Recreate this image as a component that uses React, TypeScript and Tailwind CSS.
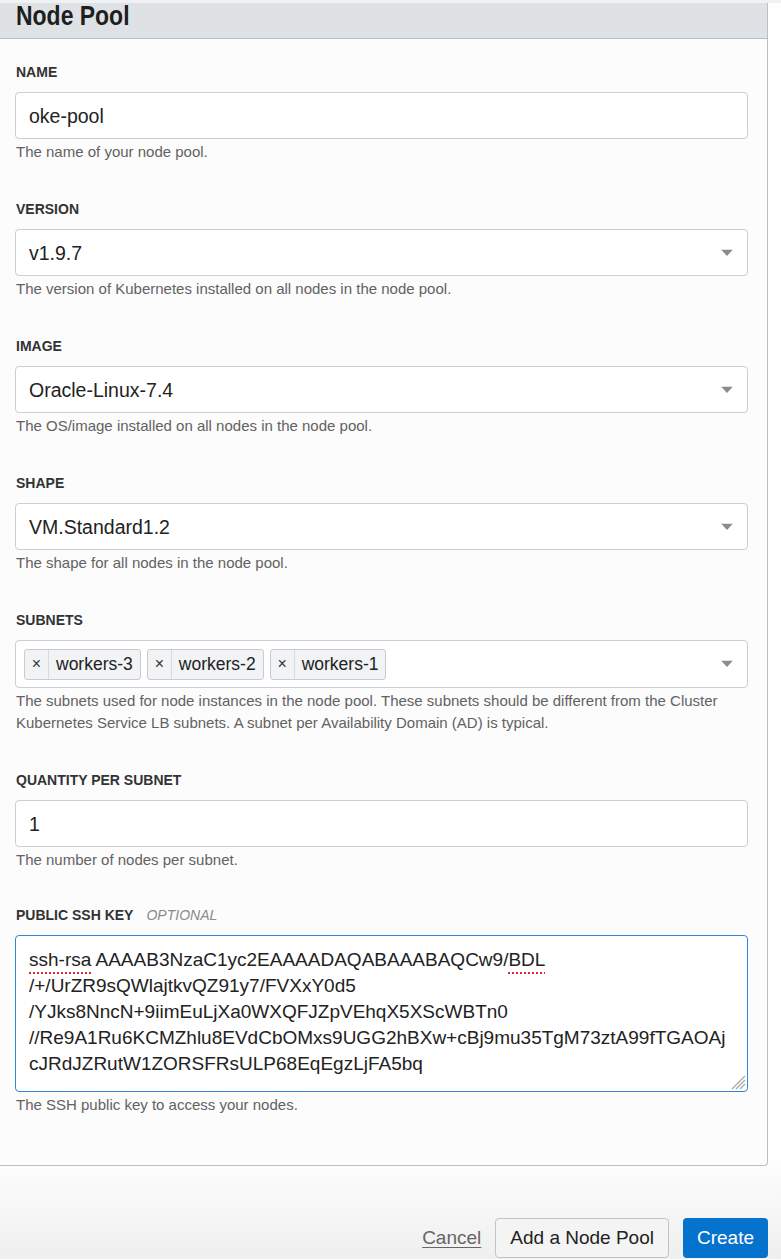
import React from "react";

const font = { fontFamily: '"Liberation Sans", Arial, Helvetica, sans-serif' };

function Arrow() {
  return (
    <svg width="12" height="7" viewBox="0 0 12 7" className="absolute right-[14px] top-1/2 -translate-y-1/2">
      <path d="M0 0 L12 0 L6 6.5 Z" fill="#8c8c8c" />
    </svg>
  );
}

function Field({
  label,
  optional,
  help,
  children,
  className = "",
}: {
  label: string;
  optional?: boolean;
  help: React.ReactNode;
  children: React.ReactNode;
  className?: string;
}) {
  return (
    <div className={className}>
      <div className="h-[18px] leading-[18px] text-[14px] font-bold text-[#333] mb-[11px] pl-[1px]">
        {label}
        {optional && <span className="ml-[13px] italic font-normal text-[#8a8a8a]">OPTIONAL</span>}
      </div>
      {children}
      <div className="mt-[2px] text-[15px] leading-[22px] text-[#626262] pl-[1px]">{help}</div>
    </div>
  );
}

function TextInput({ value, select }: { value: string; select?: boolean }) {
  return (
    <div className="relative h-[47px] bg-white border border-[#cbcfd3] rounded-[4px] flex items-center pl-[13px] pt-[2px] text-[19.5px] text-[#222]">
      {value}
      {select && <Arrow />}
    </div>
  );
}

function Tag({ text }: { text: string }) {
  return (
    <div className="h-[31px] flex items-stretch bg-[#f1f3f5] border border-[#c6ccd2] rounded-[3px] text-[17.5px] text-[#222]">
      <div className="w-[24px] flex items-center justify-center text-[16px] text-[#333] border-r border-[#d3dce4]">×</div>
      <div className="flex items-center pl-[7px] pr-[7px]">{text}</div>
    </div>
  );
}

export default function App() {
  return (
    <div className="w-[781px] h-[1260px] bg-[#fefefe] overflow-hidden" style={font}>
      <div className="h-[3px] bg-[#f0f1f2]" />
      <div className="w-[768px] bg-[#fcfcfc] border-r border-b border-[#b9c0c7] rounded-br-[4px]">
        <div className="h-[36px] bg-[#dfe2e5] border-b border-[#b7bec5] pl-[16px] pt-[2px]">
          <div className="inline-block origin-left scale-x-[0.82] text-[28px] leading-[22px] font-bold text-[#1e1e1e] whitespace-nowrap">
            Node Pool
          </div>
        </div>
        <div className="pt-[24px] pl-[15px] pr-[19px] pb-[49px]">
          <Field label="NAME" help="The name of your node pool.">
            <TextInput value="oke-pool" />
          </Field>
          <Field className="mt-[37px]" label="VERSION" help="The version of Kubernetes installed on all nodes in the node pool.">
            <TextInput value="v1.9.7" select />
          </Field>
          <Field className="mt-[37px]" label="IMAGE" help="The OS/image installed on all nodes in the node pool.">
            <TextInput value="Oracle-Linux-7.4" select />
          </Field>
          <Field className="mt-[37px]" label="SHAPE" help="The shape for all nodes in the node pool.">
            <TextInput value="VM.Standard1.2" select />
          </Field>
          <Field
            className="mt-[37px]"
            label="SUBNETS"
            help={
              <>
                The subnets used for node instances in the node pool. These subnets should be different from the Cluster
                <br />
                Kubernetes Service LB subnets. A subnet per Availability Domain (AD) is typical.
              </>
            }
          >
            <div className="relative h-[48px] bg-white border border-[#cbcfd3] rounded-[4px] flex items-center pl-[8px] gap-[6px]">
              <Tag text="workers-3" />
              <Tag text="workers-2" />
              <Tag text="workers-1" />
              <Arrow />
            </div>
          </Field>
          <Field className="mt-[37px]" label="QUANTITY PER SUBNET" help="The number of nodes per subnet.">
            <TextInput value="1" />
          </Field>
          <Field className="mt-[35px]" label="PUBLIC SSH KEY" optional help="The SSH public key to access your nodes.">
            <div className="relative h-[157px] bg-white border border-[#2f86d6] rounded-[4px] pl-[13px] pt-[11px] text-[19px] leading-[26px] text-[#222] whitespace-pre">
              <div>
                <span className="underline decoration-dotted decoration-[#e0282e] decoration-2 underline-offset-[6px]">ssh-rsa</span>
                {" AAAAB3NzaC1yc2EAAAADAQABAAABAQCw9/"}
                <span className="underline decoration-dotted decoration-[#e0282e] decoration-2 underline-offset-[6px]">BDL</span>
              </div>
              <div>/+/UrZR9sQWlajtkvQZ91y7/FVXxY0d5</div>
              <div>/YJks8NncN+9iimEuLjXa0WXQFJZpVEhqX5XScWBTn0</div>
              <div>//Re9A1Ru6KCMZhlu8EVdCbOMxs9UGG2hBXw+cBj9mu35TgM73ztA99fTGAOAj</div>
              <div>cJRdJZRutW1ZORSFRsULP68EqEgzLjFA5bq</div>
              <svg width="16" height="16" viewBox="0 0 16 16" className="absolute right-[1px] bottom-[1px]">
                <path d="M15 2 L2 15 M15 6 L6 15 M15 10 L10 15" stroke="#a8a8a8" strokeWidth="1.3" />
              </svg>
            </div>
          </Field>
        </div>
      </div>
      <div className="h-[93px] bg-gradient-to-b from-[#fdfdfd] to-[#efefef] flex justify-end items-start pt-[52px] pr-[13px]">
        <a className="h-[40px] flex items-center text-[19px] text-[#666] underline underline-offset-[3px] mr-[14px]">Cancel</a>
        <button className="h-[40px] px-[14px] bg-[#f4f4f4] border border-[#c3c3c3] rounded-[4px] text-[19px] text-[#222] mr-[14px]">
          Add a Node Pool
        </button>
        <button className="h-[40px] px-[14px] bg-[#0572ce] rounded-[4px] text-[19px] text-white">Create</button>
      </div>
    </div>
  );
}
